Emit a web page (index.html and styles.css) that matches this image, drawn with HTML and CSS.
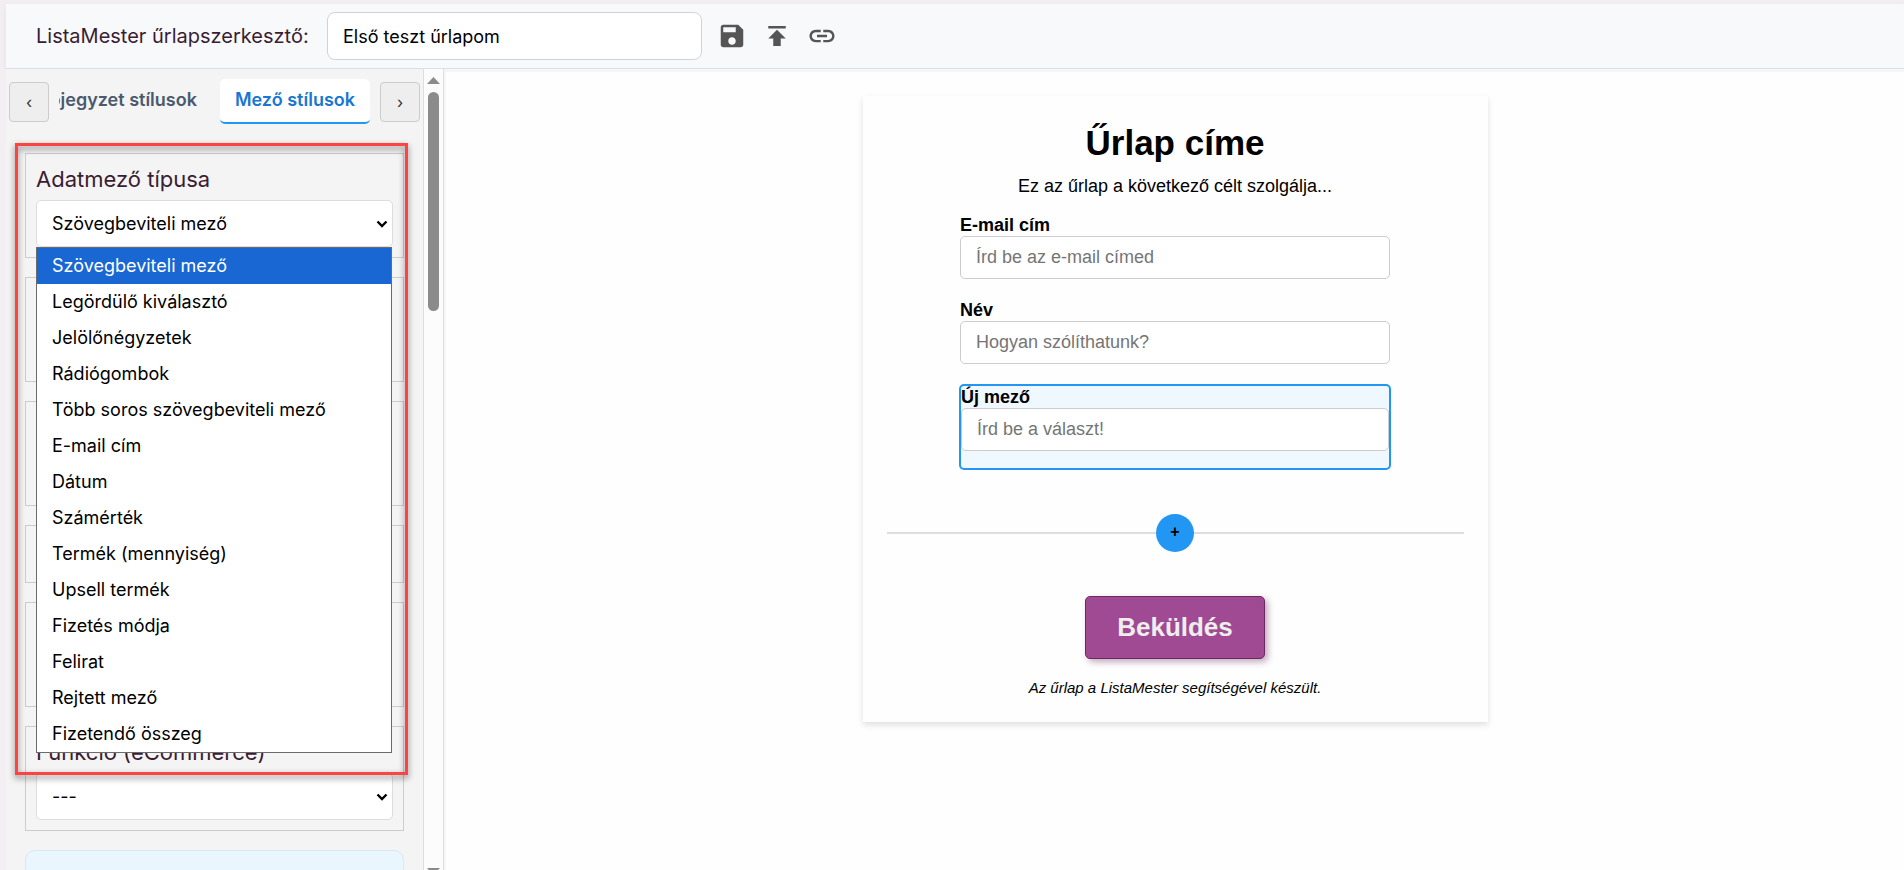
FILE: index.html
```html
<!DOCTYPE html>
<html lang="hu">
<head>
<meta charset="utf-8">
<title>ListaMester űrlapszerkesztő</title>
<link rel="stylesheet" href="styles.css">
</head>
<body>
<div class="app">
  <header class="topbar">
    <label class="topbar-title" for="form-name">ListaMester űrlapszerkesztő:</label>
    <input class="form-name" id="form-name" type="text" value="Első teszt űrlapom">
    <button class="icon-button" type="button" aria-label="Mentés">
      <svg viewBox="0 0 24 24"><path d="M17 3H5c-1.110 0-2 .9-2 2v14c0 1.100.89 2 2 2h14c1.100 0 2-.9 2-2V7l-4-4zm-5 16c-1.660 0-3-1.340-3-3s1.340-3 3-3 3 1.340 3 3-1.340 3-3 3zm3-10H5V5h10v4z"/></svg>
    </button>
    <button class="icon-button" type="button" aria-label="Publikálás">
      <svg viewBox="0 0 24 24"><path d="M5 4v2h14V4H5zm0 10h4v6h6v-6h4l-7-7-7 7z"/></svg>
    </button>
    <button class="icon-button" type="button" aria-label="Hivatkozás">
      <svg viewBox="0 0 24 24"><path d="M3.900 12c0-1.710 1.390-3.100 3.100-3.100h4V7H7c-2.760 0-5 2.240-5 5s2.240 5 5 5h4v-1.900H7c-1.710 0-3.100-1.390-3.100-3.100zM8 13h8v-2H8v2zm9-6h-4v1.900h4c1.710 0 3.100 1.390 3.100 3.100s-1.390 3.100-3.100 3.100h-4V17h4c2.760 0 5-2.240 5-5s-2.240-5-5-5z"/></svg>
    </button>
  </header>

  <div class="workspace">
    <aside class="sidebar">
      <nav class="tabs">
        <button class="tab-arrow" type="button">‹</button>
        <div class="tab-strip">
          <button class="tab" type="button">Lábjegyzet stílusok</button>
          <button class="tab tab-active" type="button">Mező stílusok</button>
        </div>
        <button class="tab-arrow" type="button">›</button>
      </nav>
      <div class="settings">
        <section class="setting">
          <label class="setting-label" for="field-type">Adatmező típusa</label>
          <div class="select-wrap">
            <select class="setting-select" id="field-type"><option>Szövegbeviteli mező</option></select>
            <svg class="chevron" viewBox="0 0 12 8"><path d="M1.500 1.500L6 6l4.500-4.500"/></svg>
            <ul class="options" role="listbox" aria-label="Adatmező típusa">
              <li class="option option-selected" role="option" aria-selected="true">Szövegbeviteli mező</li>
              <li class="option" role="option">Legördülő kiválasztó</li>
              <li class="option" role="option">Jelölőnégyzetek</li>
              <li class="option" role="option">Rádiógombok</li>
              <li class="option" role="option">Több soros szövegbeviteli mező</li>
              <li class="option" role="option">E-mail cím</li>
              <li class="option" role="option">Dátum</li>
              <li class="option" role="option">Számérték</li>
              <li class="option" role="option">Termék (mennyiség)</li>
              <li class="option" role="option">Upsell termék</li>
              <li class="option" role="option">Fizetés módja</li>
              <li class="option" role="option">Felirat</li>
              <li class="option" role="option">Rejtett mező</li>
              <li class="option" role="option">Fizetendő összeg</li>
            </ul>
          </div>
        </section>
        <section class="setting"></section>
        <section class="setting"></section>
        <section class="setting setting-short"></section>
        <section class="setting"></section>
        <section class="setting">
          <label class="setting-label" for="field-function">Funkció (eCommerce)</label>
          <div class="select-wrap">
            <select class="setting-select" id="field-function"><option>---</option></select>
            <svg class="chevron" viewBox="0 0 12 8"><path d="M1.500 1.500L6 6l4.500-4.500"/></svg>
          </div>
        </section>
        <section class="info-box"></section>
        <div class="highlight"></div>
      </div>
    </aside>

    <div class="scrollbar">
      <svg class="scroll-arrow" viewBox="0 0 13 7"><path d="M6.500 0L13 7H0z"/></svg>
      <div class="scroll-thumb"></div>
      <svg class="scroll-arrow scroll-arrow-down" viewBox="0 0 13 7"><path d="M0 0h13L6.500 7z"/></svg>
    </div>

    <main class="preview">
      <form class="card">
        <h1 class="card-title">Űrlap címe</h1>
        <p class="card-lead">Ez az űrlap a következő célt szolgálja...</p>
        <div class="fields">
          <div class="field">
            <label class="field-label" for="email">E-mail cím</label>
            <input class="field-input" id="email" type="email" placeholder="Írd be az e-mail címed">
          </div>
          <div class="field">
            <label class="field-label" for="name">Név</label>
            <input class="field-input" id="name" type="text" placeholder="Hogyan szólíthatunk?">
          </div>
          <div class="field field-active">
            <label class="field-label" for="answer">Új mező</label>
            <input class="field-input" id="answer" type="text" placeholder="Írd be a választ!">
          </div>
        </div>
        <div class="add-row"><button class="add-button" type="button" aria-label="Mező hozzáadása">+</button></div>
        <button class="submit" type="button">Beküldés</button>
        <p class="card-note">Az űrlap a ListaMester segítségével készült.</p>
      </form>
    </main>
  </div>
</div>
</body>
</html>
```
FILE: styles.css
```css
* { box-sizing: border-box; }

body {
  margin: 0;
  height: 100vh;
  overflow: hidden;
  background: #f2eef1;
  font-family: Inter, "Open Sans", sans-serif;
  font-size: 18px;
  color: #000;
}

button, input, select { font: inherit; color: inherit; }

.app {
  height: 100%;
  padding: 4px 0 0 6px;
  display: flex;
  flex-direction: column;
}

.topbar {
  flex: none;
  display: flex;
  align-items: center;
  gap: 15px;
  height: 65px;
  padding: 0 30px;
  background: #f8f9fb;
  border-bottom: 1px solid #dcdfe6;
  box-shadow: 0 2px 6px rgba(0, 0, 0, 0.06);
}

.topbar-title { min-width: 276px; font-size: 20px; color: #3a1d32; }

.form-name {
  width: 375px;
  height: 48px;
  padding: 0 15px;
  border: 1px solid #d0d3da;
  border-radius: 8px;
  background: #fff;
}

.icon-button {
  width: 30px;
  height: 30px;
  padding: 0;
  border: 0;
  background: none;
}

.icon-button svg { display: block; width: 30px; height: 30px; fill: #555; }

.workspace { flex: 1; min-height: 0; display: flex; }

.sidebar {
  flex: none;
  width: 417px;
  overflow: hidden;
  background: #f4f4f4;
}

.tabs { display: flex; align-items: center; gap: 10px; padding: 10px 3px 0; }

.tab-arrow {
  flex: none;
  width: 40px;
  height: 40px;
  padding: 0;
  border: 1px solid #ccc;
  border-radius: 4px;
  background: #eee;
  font-size: 16px;
  color: #333;
}

.tab-strip {
  flex: 1;
  min-width: 0;
  display: flex;
  justify-content: flex-end;
  gap: 8px;
  overflow: hidden;
}

.tab {
  flex: none;
  height: 45px;
  padding: 0 15px 2px;
  border: 0;
  border-bottom: 2px solid transparent;
  border-radius: 5px;
  background: none;
  font-weight: 600;
  color: #4a5a6e;
}

.tab-active { background: #fff; border-bottom-color: #2196f3; color: #1976d2; }

.settings {
  position: relative;
  display: flex;
  flex-direction: column;
  gap: 19px;
  padding: 29px 19px 0;
}

.setting { height: 105px; padding: 10px; border: 1px solid #ccc; }
.setting-short { height: 58px; }

.setting-label {
  display: block;
  height: 36px;
  line-height: 30px;
  font-size: 22px;
  color: #3a1d32;
}

.select-wrap { position: relative; }

.setting-select {
  display: block;
  width: 100%;
  height: 47px;
  padding: 0 15px;
  border: 1px solid #ddd;
  border-radius: 5px;
  background: #fff;
  appearance: none;
}

.chevron {
  position: absolute;
  top: 20px;
  right: 5px;
  width: 12px;
  height: 8px;
  fill: none;
  stroke: #000;
  stroke-width: 2.4;
  pointer-events: none;
}

.options {
  position: absolute;
  z-index: 1;
  top: 100%;
  left: 0;
  right: 1px;
  margin: 0;
  padding: 0;
  list-style: none;
  border: 1px solid #6b6b6b;
  background: #fff;
}

.option { height: 36px; padding: 0 15px; line-height: 36px; }
.option-selected { background: #1967d2; color: #fff; }

.info-box {
  height: 120px;
  border: 1px solid #d9e8f5;
  border-radius: 10px;
  background: #e9f6fe;
}

/* Red frame drawn over the open drop-down */
.highlight {
  position: absolute;
  z-index: 2;
  top: 19px;
  left: 9px;
  right: 15px;
  height: 632px;
  border: 3px solid #ff4343;
  filter: drop-shadow(0 3px 3px rgba(0, 0, 0, 0.5));
  pointer-events: none;
}

.scrollbar {
  flex: none;
  width: 21px;
  display: flex;
  flex-direction: column;
  align-items: center;
  gap: 8px;
  padding-top: 8px;
  border: solid #dcdee3;
  border-width: 0 1px;
  background: #fcfcfc;
  overflow: hidden;
}

.scroll-arrow { flex: none; width: 13px; height: 7px; fill: #8b8b8b; }
.scroll-arrow-down { margin-top: auto; margin-bottom: -5px; }
.scroll-thumb { flex: none; width: 11px; height: 219px; border-radius: 6px; background: #8b8b8b; }

.preview {
  flex: 1;
  border: solid #f5f6f7;
  border-width: 3px 0 0 2px;
  background: #fefefe;
  font-family: "Liberation Sans", Arial, sans-serif;
}

.card {
  width: 625px;
  margin: 24px auto 0;
  padding: 25px 24px 24px;
  display: flex;
  flex-direction: column;
  align-items: center;
  background: #fefefe;
  box-shadow: 0 3px 6px rgba(0, 0, 0, 0.12);
}

.card-title { margin: 0; font-size: 35px; line-height: 44px; }
.card-lead { margin: 9px 0 0; line-height: 24px; }

.fields {
  width: 432px;
  margin-top: 16px;
  display: flex;
  flex-direction: column;
  gap: 20px;
}

.field { padding: 0 1px; }
.field-label { display: block; line-height: 22px; font-weight: 700; }

.field-input {
  display: block;
  width: 100%;
  height: 43px;
  padding: 0 15px;
  border: 1px solid #ccc;
  border-radius: 5px;
  background: #fff;
}

.field-input::placeholder { color: #757575; }

.field-active {
  padding: 0 0 17px;
  border: 2px solid #2196f3;
  border-radius: 5px;
  background: #eff7ff;
}

.add-row {
  width: 100%;
  height: 38px;
  margin-top: 44px;
  display: flex;
  justify-content: center;
  background: linear-gradient(#ddd, #ddd) center / 100% 2px no-repeat;
}

.add-button {
  width: 38px;
  height: 38px;
  padding: 0 0 2px;
  border: 0;
  border-radius: 50%;
  background: #2196f3;
  font-size: 16px;
  font-weight: 700;
}

.submit {
  width: 180px;
  height: 63px;
  margin-top: 44px;
  padding: 0;
  border: 1px solid #6b2a62;
  border-radius: 5px;
  background: #9f4a92;
  box-shadow: 3px 3px 6px rgba(107, 42, 98, 0.4);
  font-size: 26px;
  font-weight: 700;
  color: #eee;
}

.card-note { margin: 19px 0 0; font-size: 15px; line-height: 20px; font-style: italic; }
```
